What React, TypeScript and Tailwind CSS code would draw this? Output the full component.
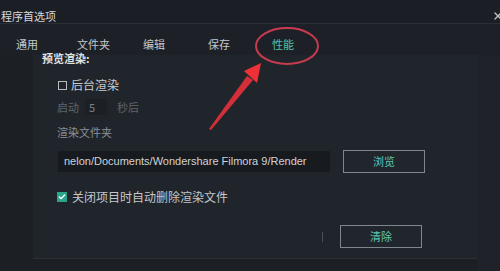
import { Check, X } from "lucide-react";

const tabs = [
  { label: "通用", ml: "ml-0" },
  { label: "文件夹", ml: "ml-[39px]" },
  { label: "编辑", ml: "ml-[33px]" },
  { label: "保存", ml: "ml-[43px]" },
  { label: "性能", ml: "ml-[42px]" },
];

export default function App() {
  return (
    <div
      className="relative h-[271px] w-[500px] overflow-hidden bg-[#1d2127] text-[#c9cdd2]"
      style={{ fontFamily: '"Noto Sans CJK SC", "Noto Sans", sans-serif' }}
    >
      {/* title bar */}
      <div className="flex h-[24px] items-center justify-between border-b border-[#2a2f36] bg-[#1b1f25] pl-[1px] pt-[9px]">
        <span className="text-[11px] leading-none text-[#d4d7db]">程序首选项</span>
        <X className="mr-[-4px] h-3 w-3 text-[#c0c4c8]" strokeWidth={2.5} />
      </div>

      {/* tabs */}
      <div className="flex h-[31px] items-center pl-[16px] pt-[10px] text-[11px] leading-none">
        {tabs.map((t) => (
          <span key={t.label} className={`${t.ml} ${t.label === "性能" ? "text-[#4fc3a9]" : "text-[#c4c8cc]"}`}>
            {t.label}
          </span>
        ))}
      </div>

      {/* body */}
      <div className="flex h-[216px]">
        <div className="w-[33px] bg-[#1c2025]" />
        <div className="flex w-[444px] flex-col bg-[#20252b]">
          <div className="flex-1 pl-[9px]">
            <div className="mt-[-2px] text-[11px] font-bold leading-none text-[#dfe2e5]">预览渲染:</div>

            <div className="ml-[16px] mt-[15px] flex h-[12px] items-center gap-[4px] text-[12px] leading-none text-[#c9cdd2]">
              <span className="h-[9px] w-[9px] border border-[#b8bcc0]" />
              <span>后台渲染</span>
            </div>

            <div className="ml-[15px] mt-[8px] flex h-[16px] items-center text-[11px] leading-none text-[#5f666e]">
              <span>启动</span>
              <span className="ml-[6px] flex h-[16px] w-[22px] items-center bg-[#1c2025] pl-[4px] text-[#7a8088]">5</span>
              <span className="ml-[10px]">秒后</span>
            </div>

            <div className="ml-[15px] mt-[12px] text-[11px] leading-none text-[#8a9097]">渲染文件夹</div>

            <div className="ml-[16px] mt-[12px] flex h-[23px] items-center">
              <div
                className="flex h-[21px] w-[272px] items-center overflow-hidden whitespace-nowrap bg-[#171a1f] pl-[6px] text-[11px] text-[#d0d3d6]"
                style={{ fontFamily: '"Liberation Sans", sans-serif' }}
              >
                nelon/Documents/Wondershare Filmora 9/Render
              </div>
              <button className="ml-[13px] flex h-[23px] w-[82px] items-center justify-center border border-[#80868d] bg-[#21262c] text-[11px] text-[#5cc7b4]">
                浏览
              </button>
            </div>

            <div className="ml-[15px] mt-[18px] flex h-[12px] items-center gap-[5px] text-[12px] leading-none text-[#c4c8cc]">
              <span className="flex h-[10px] w-[10px] items-center justify-center bg-[#2aa58a]">
                <Check className="h-[8px] w-[8px] text-white" strokeWidth={4} />
              </span>
              <span>关闭项目时自动删除渲染文件</span>
            </div>

            <div className="mt-[22px] flex h-[23px] items-center">
              <span className="ml-[280px] h-[10px] w-[1px] bg-[#4a5057]" />
              <button className="ml-[17px] flex h-[23px] w-[82px] items-center justify-center border border-[#80868d] bg-[#21262c] text-[11px] text-[#5cc7b4]">
                清除
              </button>
            </div>
          </div>
          <div className="h-[13px] border-t border-[#2b3037] bg-[#1c2025]" />
        </div>
        <div className="flex-1 bg-[#1f2329]" />
      </div>

      {/* red annotation overlay */}
      <svg className="pointer-events-none absolute left-0 top-0" width="500" height="271" viewBox="0 0 500 271">
        <ellipse cx="287" cy="46" rx="31" ry="18" fill="none" stroke="#c83a50" strokeWidth="2" />
        <path d="M209 129 L247 76 L253 80 L211 130 Z" fill="#e8303a" opacity="0.9" />
        <path d="M261 63 L244 71 L257 83 Z" fill="#ee3138" />
      </svg>
    </div>
  );
}
